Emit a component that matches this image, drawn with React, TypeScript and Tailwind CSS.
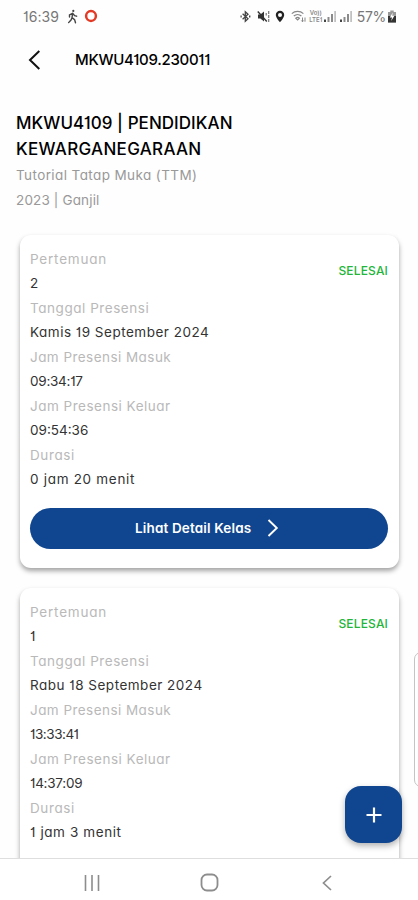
import clsx from "clsx";

type Field = { label: string; value: string; labelClass: string; valueClass: string };
type Meeting = { id: string; status: string; hasDetail: boolean; fields: Field[] };

const meetings: Meeting[] = [
  {
    id: "2",
    status: "SELESAI",
    hasDetail: true,
    fields: [
      { label: "Pertemuan", value: "2", labelClass: "tracking-[0.8px]", valueClass: "" },
      { label: "Tanggal Presensi", value: "Kamis 19 September 2024", labelClass: "tracking-[0.55px]", valueClass: "tracking-[0.5px]" },
      { label: "Jam Presensi Masuk", value: "09:34:17", labelClass: "tracking-[0.45px]", valueClass: "tracking-[-0.25px]" },
      { label: "Jam Presensi Keluar", value: "09:54:36", labelClass: "tracking-[0.5px]", valueClass: "" },
      { label: "Durasi", value: "0 jam 20 menit", labelClass: "tracking-[0.6px]", valueClass: "tracking-[0.7px]" },
    ],
  },
  {
    id: "1",
    status: "SELESAI",
    hasDetail: false,
    fields: [
      { label: "Pertemuan", value: "1", labelClass: "tracking-[0.8px]", valueClass: "" },
      { label: "Tanggal Presensi", value: "Rabu 18 September 2024", labelClass: "tracking-[0.55px]", valueClass: "tracking-[0.5px]" },
      { label: "Jam Presensi Masuk", value: "13:33:41", labelClass: "tracking-[0.45px]", valueClass: "tracking-[-0.45px]" },
      { label: "Jam Presensi Keluar", value: "14:37:09", labelClass: "tracking-[0.5px]", valueClass: "tracking-[-0.25px]" },
      { label: "Durasi", value: "1 jam 3 menit", labelClass: "tracking-[0.6px]", valueClass: "tracking-[0.6px]" },
    ],
  },
];

function Signal() {
  return (
    <svg width="13" height="13" viewBox="0 0 13 13" fill="#8a8a8a">
      <rect x="0" y="9.5" width="2" height="2.5" fill="#444" />
      <rect x="3.5" y="7" width="2" height="5" />
      <rect x="7" y="4" width="2" height="8" />
      <rect x="10.3" y="1" width="1.6" height="11" fill="#bbb" />
    </svg>
  );
}

function StatusBar() {
  return (
    <div className="flex h-8 shrink-0 items-center pr-[21px] pl-[23px] text-[#777]">
      <span className="w-[38px] text-[14px] tracking-[0.1px] whitespace-nowrap">16:39</span>
      <svg className="ml-[6px]" width="11" height="15" viewBox="0 0 11 15" fill="none" stroke="#444" strokeWidth="1.4" strokeLinecap="round">
        <circle cx="6.3" cy="1.9" r="1.1" fill="#444" stroke="none" />
        <path d="M5.7 4.2 5 8.6M5.5 4.4 2.5 6v2M6 4.6l1.6 2 2 .6M5 8.6l2.6 2 .9 3.2M5 8.8 4 11l-2.4 2.6" />
      </svg>
      <svg className="ml-[6px]" width="14" height="14" viewBox="0 0 14 14">
        <circle cx="7" cy="7" r="4.9" fill="none" stroke="#e23a24" strokeWidth="2.5" />
      </svg>
      <div className="ml-auto flex items-center">
        <svg width="11" height="13" viewBox="0 0 11 13" fill="none" stroke="#444" strokeWidth="1.3">
          <path d="m2.6 3.7 5.4 5-2.700 2.500V1.800L8 4.200 2.600 9.200" />
          <path d="M.5 6.500h1.200M9 6.500h1.400" strokeWidth="1.800" />
        </svg>
        <svg className="ml-[6px]" width="14" height="13" viewBox="0 0 14 13">
          <path d="M1 4.500h2.400L7 1.500v10L3.400 8.500H1z" fill="#333" />
          <path d="m.8 1.500 9 10" stroke="#333" strokeWidth="1.400" />
          <path d="M11.700 1v11M9.200 3v2.500" stroke="#777" strokeWidth="1.200" strokeDasharray="3 1" />
        </svg>
        <svg className="ml-[4px]" width="10" height="13" viewBox="0 0 10 13">
          <path d="M5 .8A4.200 4.200 0 0 0 .8 5c0 2.800 4.200 7.300 4.200 7.300S9.200 7.800 9.200 5A4.200 4.200 0 0 0 5 .8Zm0 2.300a2 2 0 1 1 0 4 2 2 0 0 1 0-4Z" fill="#222" fillRule="evenodd" />
        </svg>
        <svg className="ml-[6px]" width="16" height="13" viewBox="0 0 16 13" fill="none" stroke="#888" strokeWidth="1.200">
          <path d="M.8 3.600C4 .6 9.200.6 12.400 3.600M2.800 6c2.200-2 5.400-2 7.600 0M4.800 8.200c1-1 2.600-1 3.600 0L6.600 10z" />
          <path d="M11.500 7.500v4.200M14 11.700V7.500M10.400 10.500l1.100 1.300 1.100-1.300" strokeWidth="1" />
        </svg>
        <div className="ml-px flex w-[16px] flex-col text-center text-[6px] leading-[8px] font-semibold text-[#888]">
          <span>Vo))</span>
          <span className="-mt-px">LTE1</span>
        </div>
        <Signal />
        <span className="w-[3px]" />
        <Signal />
        <span className="ml-[4px] text-[14px] tracking-[-0.300px]">57%</span>
        <svg className="ml-px" width="10" height="13" viewBox="0 0 10 13">
          <path d="M3.300.5h3.400V2H9v10.500H1V2h2.300z" fill="#999" />
          <path d="M1 6h8v6.500H1z" fill="#333" />
          <path d="M5.800 2.500 2.800 7.400H5l-.8 3.600 3.200-5.200H5.200z" fill="#fff" />
        </svg>
      </div>
    </div>
  );
}

function MeetingCard({ meeting }: { meeting: Meeting }) {
  return (
    <article className="h-[333px] shrink-0 rounded-[11px] bg-white pt-[12px] pr-[11px] pl-[10px] shadow-[0_3px_5px_rgba(0,0,0,0.36)]">
      <div className="flex items-start justify-between">
        <dl className="text-[13.5px] leading-[24.450px] whitespace-nowrap">
          {meeting.fields.map((field) => (
            <div key={field.label}>
              <dt className={clsx("text-[#b9b9b9]", field.labelClass)}>{field.label}</dt>
              <dd className={clsx("text-[#333]", field.valueClass)}>{field.value}</dd>
            </div>
          ))}
        </dl>
        <span className="mt-[14px] text-[12px] leading-5 font-medium tracking-[0.15px] text-[#22b53a]">
          {meeting.status}
        </span>
      </div>
      {meeting.hasDetail && (
        <button
          type="button"
          className="mt-[16px] flex h-[41px] w-full items-center rounded-full bg-[#10468f] pl-[105px] text-white"
        >
          <span className="w-[118px] pt-px text-left text-[13.5px] font-semibold tracking-[0.15px] whitespace-nowrap">
            Lihat Detail Kelas
          </span>
          <svg className="ml-[14px]" width="12" height="18" viewBox="0 0 12 18" fill="none" stroke="currentColor" strokeWidth="1.900">
            <path d="m1.500 1 8.300 8-8.300 8" />
          </svg>
        </button>
      )}
    </article>
  );
}

export default function App() {
  return (
    <div className="relative flex h-[900px] w-[418px] flex-col overflow-hidden bg-[#fefefe] font-['Inter',sans-serif] [font-feature-settings:'cv11','cv01']">
      <StatusBar />
      <header className="flex h-14 shrink-0 items-center pl-[28px]">
        <svg width="13" height="20" viewBox="0 0 13 20" fill="none" stroke="#111" strokeWidth="2">
          <path d="M11.300 1 2 10l9.300 9" />
        </svg>
        <h1 className="ml-[34px] text-[15px] font-medium tracking-[-0.28px] whitespace-nowrap text-black">MKWU4109.230011</h1>
      </header>
      <main className="flex min-h-0 flex-1 flex-col overflow-hidden pt-[22px]">
        <div className="shrink-0 px-4">
          <h2 className="text-[17px] leading-[26px] font-medium whitespace-nowrap text-black">
            <span className="block tracking-[0.05px]">MKWU4109 | PENDIDIKAN</span>
            <span className="block tracking-[0.3px]">KEWARGANEGARAAN</span>
          </h2>
          <p className="mt-px text-[13.5px] leading-[24.500px] whitespace-nowrap text-[#999]">
            <span className="block tracking-[0.4px]">Tutorial Tatap Muka (TTM)</span>
            <span className="block tracking-[0.15px]">2023 | Ganjil</span>
          </p>
        </div>
        <div className="mt-[23px] flex flex-col gap-[20px] pr-[19px] pl-[20px]">
          {meetings.map((meeting) => (
            <MeetingCard key={meeting.id} meeting={meeting} />
          ))}
        </div>
      </main>
      <nav className="flex h-[42px] shrink-0 items-center border-t-[1.500px] border-[#dedede] bg-white pt-[6px]">
        <svg className="ml-[84px]" width="16" height="16" viewBox="0 0 16 16" stroke="#8d8d8d" strokeWidth="1.600">
          <path d="M1.500 0v16M8 0v16M14.500 0v16" />
        </svg>
        <svg className="ml-[100px]" width="19" height="19" viewBox="0 0 19 19" fill="none" stroke="#8d8d8d" strokeWidth="1.800">
          <rect x="1.500" y="1.500" width="16" height="16" rx="5.500" />
        </svg>
        <svg className="ml-[102px]" width="12" height="16" viewBox="0 0 12 16" fill="none" stroke="#8d8d8d" strokeWidth="1.700">
          <path d="M10 1 2.500 8l7.500 7" />
        </svg>
      </nav>
      <button
        type="button"
        className="absolute top-[786px] left-[345px] flex size-[57px] items-center justify-center rounded-[16px] bg-[#10468f] shadow-[0_3px_6px_rgba(0,0,0,0.300)]"
      >
        <svg width="16" height="16" viewBox="0 0 16 16" stroke="#fff" strokeWidth="2.200">
          <path d="M8 .5v15M.5 8h15" />
        </svg>
      </button>
      <div className="absolute top-[652px] left-[414px] h-[135px] w-3 rounded-l-[7px] border border-[#c4c4c4] bg-white" />
    </div>
  );
}
